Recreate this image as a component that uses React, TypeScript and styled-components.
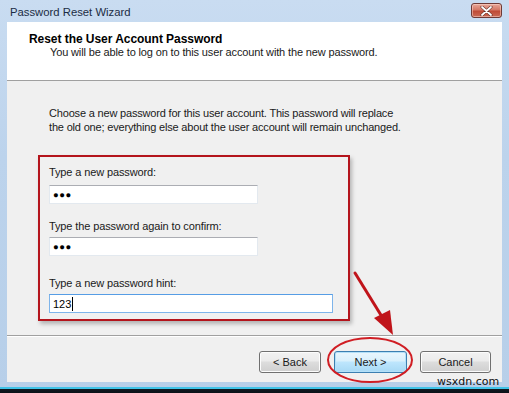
import React from "react";
import styled, { createGlobalStyle } from "styled-components";

const Global = createGlobalStyle`
  html, body { margin: 0; padding: 0; }
  body { width: 509px; height: 393px; overflow: hidden; font-family: "Liberation Sans", Arial, sans-serif; }
`;

const Window = styled.div`
  position: relative;
  width: 509px;
  height: 393px;
  display: flex;
  flex-direction: column;
  background: linear-gradient(180deg, #c9dcf1 0%, #bcd3ec 40%, #b7cfe9 100%);
  overflow: hidden;
`;

const TitleBar = styled.div`
  height: 22px;
  flex: none;
  display: flex;
  align-items: center;
  justify-content: space-between;
  padding: 0 7px 0 10px;
`;

const Title = styled.div`
  font-size: 11.3px;
  color: #1b2c44;
  padding-top: 1px;
`;

const CloseButton = styled.div`
  align-self: flex-start;
  margin-top: 3px;
  width: 31px;
  height: 15px;
  box-sizing: border-box;
  border: 1px solid #6e3a36;
  border-radius: 3px;
  background: linear-gradient(180deg, #e8a899 0%, #d47866 45%, #c04a35 55%, #c96a55 100%);
  display: flex;
  align-items: center;
  justify-content: center;
  box-shadow: inset 0 0 0 1px rgba(255, 220, 210, 0.5);
`;

const Client = styled.div`
  flex: 1;
  margin: 0 7px 0 7px;
  display: flex;
  flex-direction: column;
  background: #f0f0f0;
`;

const Header = styled.div`
  height: 59px;
  flex: none;
  background: #ffffff;
  border-bottom: 1px solid #a0a0a0;
  padding: 10px 0 0 22px;
  box-sizing: border-box;
`;

const HeaderTitle = styled.div`
  font-size: 12px;
  font-weight: bold;
  color: #000;
  line-height: 14px;
  letter-spacing: -0.05px;
`;

const HeaderSub = styled.div`
  font-size: 11px;
  color: #1a1a1a;
  line-height: 13px;
  padding-left: 21px;
  letter-spacing: -0.14px;
`;

const Body = styled.div`
  flex: 1;
  padding: 26px 0 0 42px;
  box-sizing: border-box;
  border-bottom: 1px solid #a0a0a0;
`;

const Intro = styled.p`
  margin: 0;
  font-size: 11px;
  line-height: 13.5px;
  color: #1a1a1a;
  letter-spacing: -0.18px;
`;

const RedBox = styled.div`
  margin: 21px 0 0 -11px;
  width: 312px;
  height: 166px;
  box-sizing: border-box;
  border: 2px solid #b4141c;
  padding: 8px 0 0 9px;
  display: flex;
  flex-direction: column;
  box-shadow: 2px 3px 4px rgba(0, 0, 0, 0.25);
`;

const Label = styled.div<{ gap: number }>`
  font-size: 11px;
  line-height: 13px;
  color: #1a1a1a;
  letter-spacing: -0.12px;
  margin-top: ${(p) => p.gap}px;
`;

const Field = styled.div<{ wide?: boolean; focused?: boolean; gap: number }>`
  margin-top: ${(p) => p.gap}px;
  width: ${(p) => (p.wide ? "284px" : "209px")};
  height: 19px;
  box-sizing: border-box;
  background: #fff;
  border: 1px solid ${(p) => (p.focused ? "#7eb4ea" : "#e3e9ef")};
  border-top-color: ${(p) => (p.focused ? "#569de5" : "#abadb3")};
  display: flex;
  align-items: center;
  padding-left: 3px;
  font-size: 11px;
  color: #000;
`;

const Dots = styled.span`
  font-size: 9.5px;
  letter-spacing: 0.5px;
  line-height: 1;
`;

const Caret = styled.span`
  display: inline-block;
  width: 1px;
  height: 14px;
  background: #000;
  margin-left: 1px;
`;

const Footer = styled.div`
  height: 46px;
  flex: none;
  border-top: 1px solid #ffffff;
  display: flex;
  align-items: flex-start;
  justify-content: flex-end;
  padding: 14px 11px 0 0;
  box-sizing: border-box;
  gap: 13px;
`;

const Button = styled.div<{ w: number; primary?: boolean }>`
  width: ${(p) => p.w}px;
  height: 22px;
  box-sizing: border-box;
  border: 1px solid ${(p) => (p.primary ? "#3c7fb1" : "#707070")};
  border-radius: 3px;
  background: ${(p) =>
    p.primary
      ? "linear-gradient(180deg, #eaf6fd 0%, #d9f0fc 45%, #bee6fd 50%, #a7d9f5 100%)"
      : "linear-gradient(180deg, #f2f2f2 0%, #ebebeb 45%, #dddddd 50%, #cfcfcf 100%)"};
  box-shadow: inset 0 0 0 1px ${(p) => (p.primary ? "#b4e0f8" : "#fcfcfc")};
  display: flex;
  align-items: center;
  justify-content: center;
  font-size: 11px;
  color: #1a1a1a;
`;

const BottomFrame = styled.div`
  height: 5px;
  flex: none;
`;

const TaskStrip = styled.div`
  height: 6px;
  flex: none;
  background: linear-gradient(180deg, #3fc3e8 0px, #3fc3e8 2px, #101820 2px, #0b1218 100%);
`;

const Overlay = styled.svg`
  position: absolute;
  left: 0;
  top: 0;
  pointer-events: none;
`;

const Watermark = styled.div`
  position: absolute;
  left: 437px;
  top: 375px;
  font-family: "DejaVu Sans", sans-serif;
  font-size: 11px;
  color: #111;
  letter-spacing: 0px;
`;

export default function App() {
  return (
    <>
      <Global />
      <Window>
        <TitleBar>
          <Title>Password Reset Wizard</Title>
          <CloseButton>
            <svg width="13" height="10" viewBox="0 0 13 10">
              <path d="M2 1 L11 9 M11 1 L2 9" stroke="#5a2a22" strokeWidth="3" strokeLinecap="round" />
              <path d="M2 1 L11 9 M11 1 L2 9" stroke="#ffffff" strokeWidth="1.8" strokeLinecap="round" />
            </svg>
          </CloseButton>
        </TitleBar>
        <Client>
          <Header>
            <HeaderTitle>Reset the User Account Password</HeaderTitle>
            <HeaderSub>You will be able to log on to this user account with the new password.</HeaderSub>
          </Header>
          <Body>
            <Intro>
              Choose a new password for this user account. This password will replace
              <br />
              the old one; everything else about the user account will remain unchanged.
            </Intro>
            <RedBox>
              <Label gap={1}>Type a new password:</Label>
              <Field gap={6}>
                <Dots>●●●</Dots>
              </Field>
              <Label gap={16}>Type the password again to confirm:</Label>
              <Field gap={4}>
                <Dots>●●●</Dots>
              </Field>
              <Label gap={21}>Type a new password hint:</Label>
              <Field gap={4} wide focused>
                123
                <Caret />
              </Field>
            </RedBox>
          </Body>
          <Footer>
            <Button w={62}>&lt; Back</Button>
            <Button w={73} primary>Next &gt;</Button>
            <Button w={71}>Cancel</Button>
          </Footer>
        </Client>
        <BottomFrame />
        <TaskStrip />
        <Overlay width="509" height="393" viewBox="0 0 509 393">
          <line x1="355" y1="273" x2="384" y2="320" stroke="#c0141a" strokeWidth="3" strokeLinecap="round" />
          <polygon points="393,335 374,318 390,310" fill="#c0141a" />
          <ellipse cx="370" cy="360" rx="42" ry="22" fill="none" stroke="#d01e24" strokeWidth="2" />
        </Overlay>
        <Watermark>wsxdn.com</Watermark>
      </Window>
    </>
  );
}
